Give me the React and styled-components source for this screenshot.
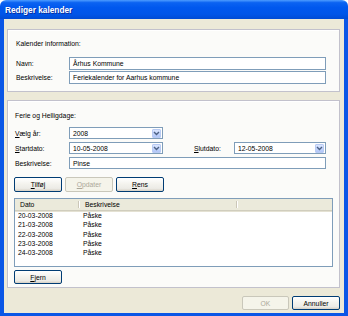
import React from 'react';
import styled, { createGlobalStyle } from 'styled-components';

const GlobalStyle = createGlobalStyle`
  html, body {
    margin: 0;
    padding: 0;
    background: #ffffff;
  }
  body {
    font-family: "Liberation Sans", Arial, sans-serif;
    font-size: 6.8px;
    color: #000;
  }
  * { box-sizing: border-box; }
`;

const Window = styled.div`
  width: 348px;
  height: 316px;
  display: flex;
  flex-direction: column;
`;

const TitleBar = styled.div`
  height: 19px;
  display: flex;
  align-items: center;
  padding-left: 5px;
  border-radius: 6px 6px 0 0;
  background: linear-gradient(180deg, #4d9cff 0%, #0b63f2 14%, #0058ee 40%, #0055e8 75%, #004bd4 100%);
  color: #ffffff;
  font-size: 8.3px;
  font-weight: bold;
  text-shadow: 1px 1px 0 #0a2f9e;
`;

const Body = styled.div`
  flex: 1;
  display: flex;
  flex-direction: column;
  background: #ece9d8;
  border-style: solid;
  border-color: #0a56e6;
  border-width: 0 4px 3px 4px;
  padding: 10px 4px 0 3px;
`;

const Panel = styled.div`
  background: #fbfbf9;
  border: 1px solid #c2c1cc;
  box-shadow: inset 1px 1px 0 #ffffff;
  padding: ${p => p.$pad};
  margin-bottom: 8px;
`;

const Heading = styled.div`
  height: 10px;
  line-height: 10px;
  padding-left: 1px;
  margin-bottom: ${p => p.$mb}px;
`;

const FormGrid = styled.div`
  display: grid;
  grid-template-columns: ${p => p.$cols};
  row-gap: ${p => p.$gap}px;
  margin-right: ${p => p.$mr}px;
  align-items: center;
`;

const Label = styled.div`
  padding-left: 1px;
  white-space: nowrap;
`;

const TextBox = styled.div`
  height: ${p => p.$h}px;
  border: 1px solid #7f9db9;
  background: #ffffff;
  padding-left: 3px;
  display: flex;
  align-items: center;
  white-space: nowrap;
  overflow: hidden;
  grid-column: ${p => p.$span || 'auto'};
`;

const Combo = styled.div`
  height: 12px;
  border: 1px solid #7f9db9;
  background: #ffffff;
  padding-left: 3px;
  display: flex;
  align-items: center;
  justify-content: space-between;
`;

const ComboArrow = styled.div`
  width: 9px;
  height: 9px;
  margin-right: 1px;
  border-radius: 1px;
  background: linear-gradient(180deg, #dbe6ff 0%, #c1d3fb 60%, #b1c6f7 100%);
  border: 1px solid #b9cbf3;
  display: flex;
  align-items: center;
  justify-content: center;
`;

const ButtonRow = styled.div`
  display: flex;
  gap: ${p => p.$gap}px;
  margin-top: ${p => p.$mt || 0}px;
  justify-content: ${p => (p.$end ? 'flex-end' : 'flex-start')};
`;

const Button = styled.div`
  width: ${p => p.$w}px;
  height: ${p => p.$h}px;
  border: 1px solid ${p => (p.$disabled ? '#c9c7ba' : '#003c74')};
  border-radius: 2px;
  background: ${p =>
    p.$disabled
      ? '#f5f4ea'
      : 'linear-gradient(180deg, #ffffff 0%, #f4f3ee 45%, #ecebe6 80%, #d6d0c5 100%)'};
  color: ${p => (p.$disabled ? '#aca899' : '#000000')};
  display: flex;
  align-items: center;
  justify-content: center;
`;

const ListView = styled.div`
  height: 69px;
  margin-top: 6px;
  border: 1px solid #7f9db9;
  background: #ffffff;
`;

const ListHeader = styled.div`
  height: 12px;
  display: flex;
  background: #ebeadb;
  border-bottom: 1px solid #d0cdbd;
  box-shadow: 0 1px 0 #e4e1d2;
`;

const HeaderCell = styled.div`
  width: ${p => p.$w}px;
  padding-left: ${p => p.$pl}px;
  display: flex;
  align-items: center;
  border-right: ${p => (p.$last ? 'none' : '1px solid #cbc7b8')};
  box-shadow: ${p => (p.$last ? 'none' : '1px 0 0 #ffffff')};
  margin: ${p => (p.$last ? '0' : '2px 0')};
  flex: ${p => (p.$last ? 1 : 'none')};
`;

const ListRow = styled.div`
  display: flex;
  height: 9.3px;
  line-height: 9.3px;
`;

const Cell = styled.div`
  width: ${p => p.$w}px;
  padding-left: ${p => p.$pl}px;
`;

const Arrow = () => (
  <svg width="7" height="5" viewBox="0 0 7 5">
    <path d="M1 1 L3.5 3.5 L6 1" fill="none" stroke="#4d6185" strokeWidth="1.4" />
  </svg>
);

const Select = ({ value }) => (
  <Combo>
    <span>{value}</span>
    <ComboArrow>
      <Arrow />
    </ComboArrow>
  </Combo>
);

const holidays = ['20-03-2008', '21-03-2008', '22-03-2008', '23-03-2008', '24-03-2008'];

export default function App() {
  return (
    <Window>
      <GlobalStyle />
      <TitleBar>Rediger kalender</TitleBar>
      <Body>
        <Panel $pad="9px 13px 7px 7px">
          <Heading $mb={8}>Kalender information:</Heading>
          <FormGrid $cols="54px 1fr" $gap={1} $mr={0}>
            <Label>Navn:</Label>
            <TextBox $h={13}>Århus Kommune</TextBox>
            <Label>Beskrivelse:</Label>
            <TextBox $h={13}>Feriekalender for Aarhus kommune</TextBox>
          </FormGrid>
        </Panel>

        <Panel $pad="10px 6px 3px 6px">
          <Heading $mb={6}>Ferie og Helligdage:</Heading>
          <FormGrid $cols="55px 94px 1fr 41px 92px" $gap={3} $mr={7}>
            <Label><u>V</u>ælg år:</Label>
            <Select value="2008" />
            <div />
            <div />
            <div />
            <Label><u>S</u>tartdato:</Label>
            <Select value="10-05-2008" />
            <div />
            <Label><u>S</u>lutdato:</Label>
            <Select value="12-05-2008" />
            <Label>Beskrivelse:</Label>
            <TextBox $h={12} $span="2 / -1">Pinse</TextBox>
          </FormGrid>

          <ButtonRow $gap={3} $mt={8}>
            <Button $w={48} $h={15}><span><u>T</u>ilføj</span></Button>
            <Button $w={48} $h={15} $disabled><span><u>O</u>pdater</span></Button>
            <Button $w={48} $h={15}><span><u>R</u>ens</span></Button>
          </ButtonRow>

          <ListView>
            <ListHeader>
              <HeaderCell $w={64} $pl={5}>Dato</HeaderCell>
              <HeaderCell $w={158} $pl={6}>Beskrivelse</HeaderCell>
              <HeaderCell $last />
            </ListHeader>
            {holidays.map(d => (
              <ListRow key={d}>
                <Cell $w={64} $pl={3}>{d}</Cell>
                <Cell $w={158} $pl={4}>Påske</Cell>
              </ListRow>
            ))}
          </ListView>

          <ButtonRow $gap={3} $mt={3}>
            <Button $w={48} $h={14}><span><u>F</u>jern</span></Button>
          </ButtonRow>
        </Panel>

        <ButtonRow $gap={3} $end>
          <Button $w={47} $h={14} $disabled>OK</Button>
          <Button $w={48} $h={14}>Annuller</Button>
        </ButtonRow>
      </Body>
    </Window>
  );
}
